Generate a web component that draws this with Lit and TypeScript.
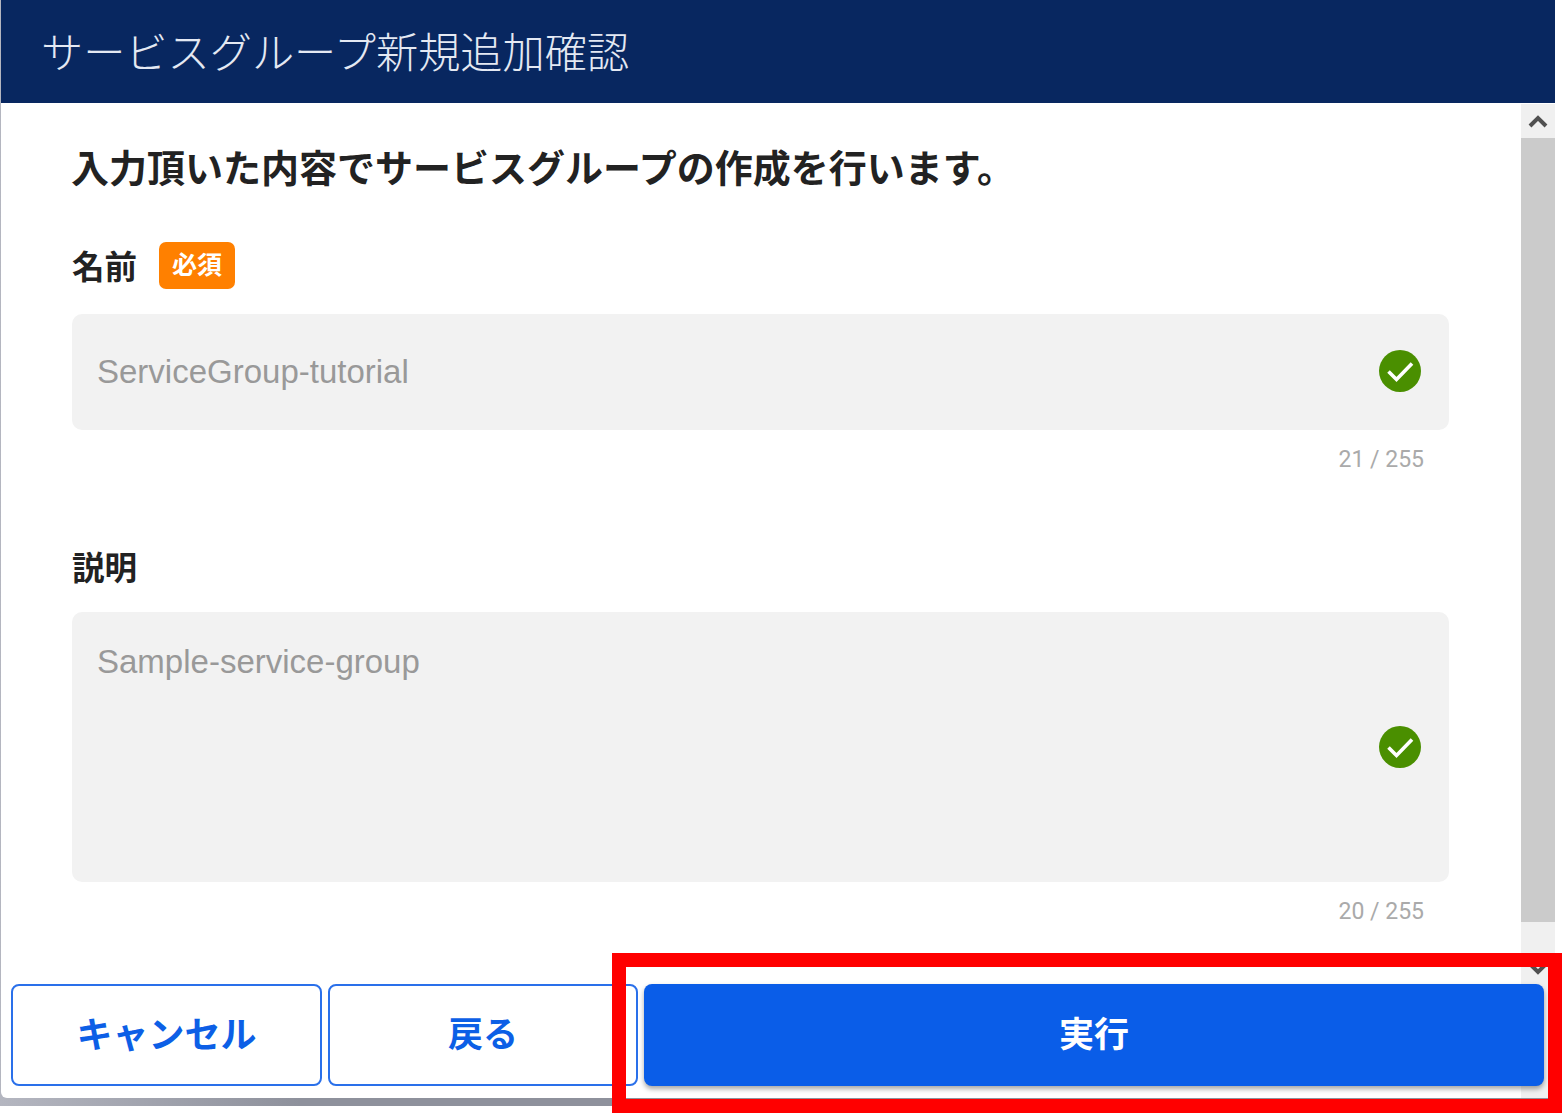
import { LitElement, html, css } from "lit";
import { customElement } from "lit/decorators.js";

const check = html`<svg class="check" viewBox="0 0 42 42" aria-hidden="true">
  <circle cx="21" cy="21" r="21" fill="#4a8f00"></circle>
  <path d="M9.5 21.5 L17.5 29.5 L33 13.5" fill="none" stroke="#fff" stroke-width="3.6"></path>
</svg>`;

@customElement("app-root")
export class AppRoot extends LitElement {
  static styles = css`
    :host {
      display: block;
      position: relative;
      width: 1562px;
      height: 1113px;
      overflow: hidden;
      background: #fff;
      font-family: "Noto Sans CJK JP", "Liberation Sans", sans-serif;
      color: #222;
    }
    .shade {
      width: 1555px;
      height: 1106px;
      padding: 0 0 8px 1px;
      box-sizing: border-box;
      background: linear-gradient(90deg, #b4b6c0 0, #8e919c 300px, #8e919c 100%);
    }
    .dialog {
      display: flex;
      flex-direction: column;
      height: 100%;
      background: #fff;
      border-bottom-left-radius: 6px;
      overflow: hidden;
    }
    header {
      flex: none;
      height: 103px;
      display: flex;
      align-items: center;
      padding: 0 0 5px 40px;
      box-sizing: border-box;
      background: #082760;
      color: #e4e9f3;
      font-size: 42.2px;
      font-weight: 300;
    }
    .body {
      flex: 1;
      min-height: 0;
      display: grid;
      grid-template-columns: 1fr 34px;
      grid-template-rows: 1fr;
    }
    .content {
      grid-area: 1 / 1;
      padding: 35px 71px 0;
      box-sizing: border-box;
    }
    h1 {
      margin: 0 0 48px -1px;
      font-size: 38px;
      line-height: 56px;
      font-weight: 700;
      white-space: nowrap;
      color: #222;
    }
    .label {
      display: flex;
      align-items: center;
      gap: 22px;
      height: 47px;
      font-size: 32.5px;
      font-weight: 700;
      margin-bottom: 25px;
    }
    .label .first { margin-bottom: 2px; }
    .label .second { margin-top: 4px; }
    .badge {
      width: 76px;
      height: 47px;
      padding-bottom: 5px;
      box-sizing: border-box;
      display: flex;
      align-items: center;
      justify-content: center;
      background: #ff8000;
      color: #fff;
      border-radius: 7px;
      font-size: 25px;
      font-weight: 700;
    }
    .field {
      display: flex;
      justify-content: space-between;
      align-items: center;
      width: 1377px;
      box-sizing: border-box;
      padding: 0 28px 0 25px;
      background: #f2f2f2;
      border-radius: 10px;
      font-family: "Liberation Sans", sans-serif;
      font-size: 33px;
      color: #999;
    }
    .field.single { height: 116px; }
    .field.single .check { margin-bottom: 2px; }
    .field.multi { height: 270px; position: relative; }
    .field.multi .val { align-self: flex-start; margin-top: 31px; line-height: 38px; }
    .check { width: 42px; height: 42px; flex: none; }
    .count {
      width: 1352px;
      text-align: right;
      font-family: Roboto, "Liberation Sans", sans-serif;
      font-size: 23px;
      line-height: 30px;
      color: #aaa;
      margin-top: 15px;
    }
    .gap { height: 65px; }
    .bar {
      grid-area: 1 / 2;
      display: flex;
      flex-direction: column;
      margin-top: 1px;
      background: #f0f0f0;
    }
    .arrow {
      flex: none;
      height: 34px;
      display: flex;
      align-items: center;
      justify-content: center;
    }
    .arrow svg { width: 20px; height: 14px; }
    .thumb { flex: none; height: 784px; background: #cbcbcb; }
    .arrow.down { margin-top: 30px; }
    footer {
      grid-area: 1 / 1 / 2 / 3;
      align-self: end;
      display: flex;
      gap: 6px;
      padding: 0 10px 12px;
      position: relative;
    }
    button {
      height: 102px;
      margin: 0;
      padding: 0 0 7px;
      border-radius: 8px;
      font-family: inherit;
      font-size: 35px;
      font-weight: 700;
      box-sizing: border-box;
      cursor: pointer;
    }
    .sec {
      width: 311px;
      background: #fff;
      border: 2px solid #2a70ea;
      color: #0c5fe6;
    }
    .sec.cancel { font-size: 36px; }
    .sec.back { width: 310px; }
    .pri {
      width: 900px;
      background: #0a5de8;
      border: none;
      color: #fff;
      box-shadow: 0 3px 5px rgba(0, 0, 0, 0.35);
    }
    .mark {
      position: absolute;
      left: 612px;
      top: 953px;
      width: 950px;
      height: 160px;
      box-sizing: border-box;
      border: 14px solid #ff0000;
      pointer-events: none;
    }
  `;

  render() {
    return html`
      <div class="shade">
        <div class="dialog">
          <header>サービスグループ新規追加確認</header>
          <div class="body">
            <div class="content">
              <h1>入力頂いた内容でサービスグループの作成を行います。</h1>
              <div class="label"><span class="first">名前</span><span class="badge">必須</span></div>
              <div class="field single"><span class="val">ServiceGroup-tutorial</span>${check}</div>
              <div class="count">21 / 255</div>
              <div class="gap"></div>
              <div class="label"><span class="second">説明</span></div>
              <div class="field multi"><span class="val">Sample-service-group</span>${check}</div>
              <div class="count">20 / 255</div>
            </div>
            <div class="bar">
              <div class="arrow">
                <svg viewBox="0 0 20 14"><path d="M2 12 L10 4 L18 12" fill="none" stroke="#505050" stroke-width="4"></path></svg>
              </div>
              <div class="thumb"></div>
              <div class="arrow down">
                <svg viewBox="0 0 20 14"><path d="M2 2 L10 10 L18 2" fill="none" stroke="#505050" stroke-width="4"></path></svg>
              </div>
            </div>
            <footer>
              <button class="sec cancel">キャンセル</button>
              <button class="sec back">戻る</button>
              <button class="pri">実行</button>
            </footer>
          </div>
        </div>
      </div>
      <div class="mark"></div>
    `;
  }
}
